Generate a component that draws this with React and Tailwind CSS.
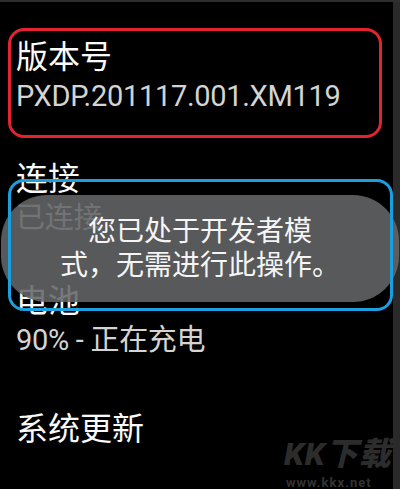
import React from 'react';

const font = { fontFamily: 'Roboto, "Noto Sans CJK SC", sans-serif' };

const items = [
  { title: '版本号', sub: 'PXDP.201117.001.XM119' },
  { title: '连接', sub: '已连接' },
  { title: '电池', sub: '90% - 正在充电' },
];

const App = () => {
  return (
    <div className="relative flex w-[400px] h-[489px] overflow-hidden bg-black text-white border-t-2 border-[#2e2e2e]" style={font}>
      {/* settings list */}
      <div className="flex-1 flex flex-col pt-[13px]">
        {items.map((item) => (
          <div key={item.title} className="px-[16px] py-[24px]">
            <div className="text-[32px] leading-[36px] text-neutral-50">{item.title}</div>
            <div className="mt-[4px] text-[29px] leading-[34px] text-neutral-300 tracking-[-0.3px]">{item.sub}</div>
          </div>
        ))}
        <div className="px-[16px] pt-[30px]">
          <div className="text-[32px] leading-[36px] text-neutral-50">系统更新</div>
        </div>
      </div>
      <div className="w-[7px] bg-[#2a2a2a]" />

      {/* toast */}
      <div className="absolute left-[1px] top-[193px] w-[398px] h-[107px] rounded-[46px] bg-[rgba(100,101,104,0.88)] flex items-center justify-center">
        <p className="text-center text-[28px] leading-[34px] text-neutral-100">
          您已处于开发者模
          <br />
          式，无需进行此操作。
        </p>
      </div>

      {/* annotation boxes */}
      <div className="absolute left-[8px] top-[26px] w-[374px] h-[110px] rounded-[16px] border-[3px] border-[#e3232f]" />
      <div className="absolute left-[8px] top-[177px] w-[385px] h-[132px] rounded-[16px] border-[3px] border-[#1b9fdf]" />

      {/* watermark */}
      <div className="absolute left-[284px] top-[434px] flex flex-col items-start gap-[4px] text-[#2c2c2c]">
        <span className="text-[32px] leading-[36px] font-black italic tracking-[1px]">KK下载</span>
        <span className="ml-[2px] text-[13px] leading-[13px] font-bold tracking-[1px] text-[#333333]">www.kkx.net</span>
      </div>
    </div>
  );
};

export default App;
